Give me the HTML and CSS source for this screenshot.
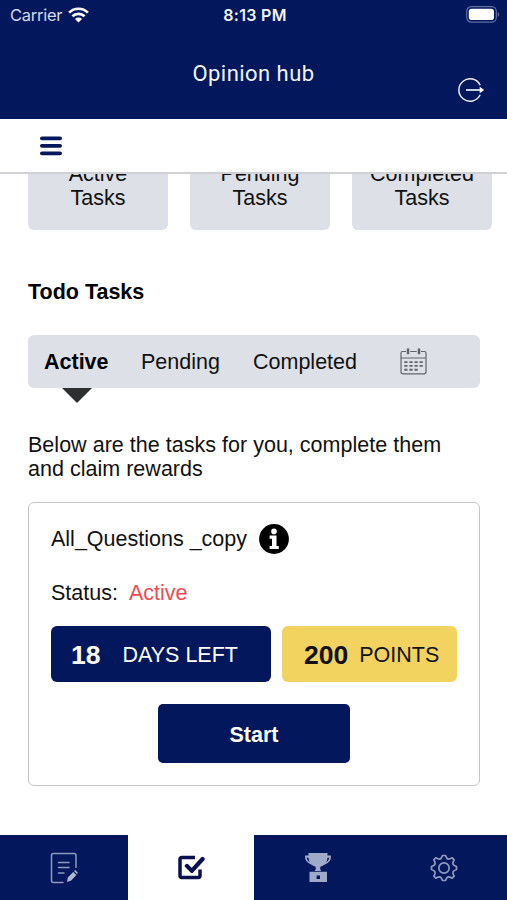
FILE: index.html
```html
<!DOCTYPE html>
<html lang="en">
<head>
<meta charset="utf-8">
<title>Opinion hub</title>
<link rel="stylesheet" href="styles.css">
</head>
<body>
<div class="app">
  <header class="header">
    <div class="status">
      <div class="carrier"><span class="carrier-name">Carrier</span>
        <svg class="wifi" width="21" height="16" viewBox="0 0 21 16" fill="none" stroke="#fff" stroke-width="2.7"><path d="M1.1 5.6a13.4 13.4 0 0 1 18.8 0"/><path d="M4.4 9.3a8.7 8.7 0 0 1 12.2 0"/><path d="M10.5 15.4 7 12a5 5 0 0 1 7 0z" fill="#fff" stroke="none"/></svg>
      </div>
      <span class="time">8:13 PM</span>
      <svg class="battery" width="34" height="17" viewBox="0 0 34 17"><rect x=".7" y=".7" width="29.6" height="15.4" rx="4.6" fill="none" stroke="#656f9b" stroke-width="1.2"/><rect x="2.8" y="2.8" width="25.2" height="11.2" rx="2.8" fill="#fff"/><path d="M31.7 6v5q1.4-.6 1.4-2.5T31.7 6z" fill="#656f9b"/></svg>
    </div>
    <div class="titlebar">
      <h1 class="title">Opinion hub</h1>
      <svg class="logout" width="28" height="26" viewBox="0 0 28 26" fill="none" stroke="#eef0fa" stroke-width="1.5"><path d="M23.2 8.2A11.2 11.2 0 1 0 23.2 17.8"/><path d="M9 13h15" stroke-width="1.7"/><path d="M22.7 9.800 27.200 13l-4.500 3.200z" fill="#fff" stroke="none"/></svg>
    </div>
  </header>
  <div class="menubar">
    <svg width="22" height="20" viewBox="0 0 22 20" stroke="#02175c" stroke-width="3.8" stroke-linecap="round"><path d="M1.9 2.300h18.200M1.900 9.800h18.200M1.900 17.300h18.200"/></svg>
  </div>
  <main class="content">
    <section class="summary">
      <div class="tile">Active<br>Tasks</div>
      <div class="tile">Pending<br>Tasks</div>
      <div class="tile">Completed<br>Tasks</div>
    </section>
    <h2 class="heading">Todo Tasks</h2>
    <nav class="tabs">
      <span class="tab tab-active">Active</span>
      <span class="tab tab-pending">Pending</span>
      <span class="tab tab-completed">Completed</span>
      <svg class="calendar" width="27" height="27" viewBox="0 0 27 27" fill="none" stroke="#62656a" stroke-width="1.2"><path d="M6 3.500H2.400Q1 3.500 1 5v18.800Q1 25.800 3 25.800h21q2 0 2-2V5q0-1.500-1.400-1.500H21M10.300 3.500h6.400M1 10h25"/><path d="M8 .5v5.700M19 .5v5.700" stroke-width="2.500"/><path d="M4.300 14.100h18.500M4.300 17.900h18.500M4.300 21.800h14" stroke-width="1.900" stroke-dasharray="3.200 1.900"/></svg>
    </nav>
    <div class="pointer"></div>
    <p class="intro">Below are the tasks for you, complete them and claim rewards</p>
    <article class="task">
      <div class="task-title"><span>All_Questions _copy</span>
        <svg class="info" width="30" height="30" viewBox="0 0 30 30"><circle cx="15" cy="15" r="14.900"/><g fill="#fff"><circle cx="15" cy="7.400" r="2.800"/><path d="M10.600 11.600h6.900v10.300h2.300v3h-9.200v-3h2.400v-7.200h-2.400z"/></g></svg>
      </div>
      <div class="state">Status: <span class="state-value">Active</span></div>
      <div class="badges">
        <div class="badge days"><b>18</b><span>DAYS LEFT</span></div>
        <div class="badge points"><b>200</b><span>POINTS</span></div>
      </div>
      <button class="start">Start</button>
    </article>
  </main>
  <nav class="bottom">
    <div class="item">
      <svg width="28" height="32" viewBox="0 0 28 32" fill="none" stroke="#8f9abd" stroke-width="1.500" stroke-linecap="round"><path d="M26 15.500V3.500Q26 1.500 24 1.500H3.500Q1.500 1.500 1.500 3.500V28.500Q1.500 30.500 3.500 30.500H13"/><path d="M8.500 10.500H19M8.500 15.500H19M8.500 21H14"/><path d="m16.800 30 1.200-4.800 5.200-5.300 3.200 3.200-5.200 5.300zM24 19.100l1.200-1.200 2.700 2.800-1 1.200z" fill="#b1b9d1" stroke="none"/></svg>
    </div>
    <div class="item selected">
      <svg width="27" height="25" viewBox="0 0 27 25" fill="none" stroke="#0a104e" stroke-width="3.500" stroke-linecap="round" stroke-linejoin="round"><path d="M17 2.600H4Q2 2.600 2 4.600V20.500Q2 22.500 4 22.500H20Q22 22.500 22 20.500V14.500" stroke-linecap="butt"/><path d="m8.900 10.900 4.900 5L24.600 4" stroke-width="4.200"/></svg>
    </div>
    <div class="item">
      <svg width="28" height="30" viewBox="0 0 28 30" fill="#9fa9c8"><path d="M4.500 0h19v2.500H27q.5 7-7 9.500-1.500 1-3.700 1.700-.5 2.300.8 4.300h-6.200q1.300-2 .8-4.300Q9.500 13 8 12 .500 9.500 1 2.500h3.500z"/><path d="M4.600 4.800H2.700q.4 3 3 4.600Q4.600 7.500 4.600 4.800zM23.400 4.800H25.300q-.4 3-3 4.600Q23.400 7.500 23.400 4.800z" fill="#02175c"/><path fill-rule="evenodd" d="M5.500 18.800h17.500V29H5.500zM12.600 22.600h3.400v3.400h-3.400z"/></svg>
    </div>
    <div class="item">
      <svg width="28" height="28" viewBox="-14 -14 28 28" fill="none" stroke="#8f9abd" stroke-width="1.700" stroke-linejoin="round"><path d="M-1.500-12.500H1.500Q2.600-9.300 4-8.900T8.200-10.200L10.200-8.200Q8.500-5.400 8.900-4T12.500-1.500V1.500Q9.300 2.600 8.900 4T10.200 8.200L8.200 10.200Q5.400 8.500 4 8.900T1.500 12.500H-1.500Q-2.600 9.300-4 8.900T-8.200 10.200L-10.200 8.200Q-8.500 5.400-8.900 4T-12.500 1.500V-1.500Q-9.300-2.600-8.900-4T-10.200-8.200L-8.200-10.200Q-5.400-8.500-4-8.900T-1.500-12.500z"/><circle r="5.200"/></svg>
    </div>
  </nav>
</div>
</body>
</html>
```
FILE: styles.css
```css
* { box-sizing: border-box; }
body {
  margin: 0;
  background: #fff;
  color: #111;
  font-family: "Liberation Sans", Arial, sans-serif;
  font-size: 21.5px;
  line-height: 24px;
}
svg { display: block; flex: none; }
.app {
  width: 507px;
  height: 900px;
  display: flex;
  flex-direction: column;
  overflow: hidden;
}
.header {
  height: 119px;
  flex: none;
  background: #02175c;
  color: #f4f5fb;
}
.status {
  height: 29px;
  padding: 0 7px 0 10px;
  display: grid;
  grid-template-columns: 1fr auto 1fr;
  align-items: center;
  font-family: Inter, sans-serif;
  font-size: 16.5px;
}
.carrier { display: flex; align-items: center; gap: 6px; color: #d5d9ea; }
.carrier-name { letter-spacing: -0.25px; }
.time { font-weight: 600; font-size: 16px; letter-spacing: 0.3px; }
.battery { justify-self: end; }
.titlebar {
  height: 90px;
  display: grid;
  grid-template-columns: 1fr auto 1fr;
  padding: 0 22px;
}
.title {
  grid-column: 2;
  margin: 33px 0 0;
  font: 400 22px/24px Roboto, sans-serif;
  letter-spacing: 0.45px;
}
.logout { justify-self: end; margin-top: 48px; }
.menubar {
  height: 55px;
  flex: none;
  padding: 17px 40px 0;
  border-bottom: 2px solid #cfd1d4;
}
.content { height: 661px; flex: none; overflow: hidden; padding: 0 27px 0 28px; }
.summary {
  display: flex;
  gap: 22px;
  margin-top: -60px;
  width: 464px;
}
.tile {
  flex: 1;
  height: 116px;
  padding-top: 48px;
  border-radius: 6px;
  background: #dde0e7;
  text-align: center;
}
.heading { margin: 50px 0 0; font-size: 21.5px; line-height: 24px; color: #000; }
.tabs {
  margin-top: 31px;
  height: 53px;
  display: flex;
  align-items: center;
  padding-left: 16px;
  border-radius: 6px;
  background: #dde0e7;
}
.tab-active { font-weight: 700; width: 97px; color: #000; }
.tab-pending { width: 112px; }
.tab-completed { width: 147px; }
.pointer {
  width: 0;
  margin-left: 34px;
  border: 15px solid transparent;
  border-top-color: #2d2f30;
  border-bottom: 0;
}
.intro { margin: 30px 0 0; letter-spacing: 0.02px; }
.task {
  margin-top: 21px;
  height: 284px;
  padding: 19px 22px 0;
  border: 1px solid #c4c4c4;
  border-radius: 6px;
}
.task-title { display: flex; align-items: center; gap: 12px; height: 34px; }
.state { margin-top: 25px; }
.state-value { margin-left: 5px; color: #ee4b55; }
.badges { display: flex; gap: 11px; margin-top: 21px; }
.badge {
  height: 56px;
  display: flex;
  align-items: center;
  padding-top: 2px;
  border-radius: 6px;
}
.badge b { font-size: 26.5px; }
.days { width: 220px; padding-left: 20px; gap: 22px; background: #02175c; color: #fff; }
.points { width: 175px; padding-left: 22px; gap: 11px; background: #f2d360; color: #111; }
.start {
  display: block;
  width: 192px;
  height: 59px;
  margin: 22px auto 0;
  padding: 2px 0 0;
  border: 0;
  border-radius: 5px;
  background: #02175c;
  color: #fff;
  font: 700 21.5px/24px "Liberation Sans", Arial, sans-serif;
}
.bottom {
  height: 65px;
  flex: none;
  display: grid;
  grid-template-columns: 128px 126px 127px 126px;
}
.item {
  display: flex;
  align-items: center;
  justify-content: center;
  background: #02175c;
}
.selected { background: #fff; }
```
